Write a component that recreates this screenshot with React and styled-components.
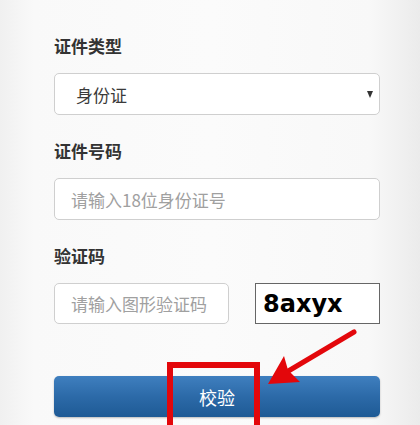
import React from "react";
import styled, { createGlobalStyle } from "styled-components";

const Global = createGlobalStyle`
  html, body { margin: 0; padding: 0; }
  body { font-family: "Noto Sans CJK SC", "Noto Sans", sans-serif; }
`;

const Page = styled.div`
  position: relative;
  width: 420px;
  height: 425px;
  overflow: hidden;
  background: linear-gradient(90deg, #f0f0f0 0%, #f9f9f9 8%, #fbfbfb 50%, #f8f8f8 88%, #ebebeb 100%);
`;

const Form = styled.div`
  display: flex;
  flex-direction: column;
  width: 326px;
  padding: 35px 0 0 54px;
`;

const Label = styled.div`
  font-size: 17px;
  line-height: 22px;
  font-weight: 700;
  color: #333;
  margin-top: ${(p) => (p.$first ? "0" : "25px")};
  margin-bottom: 16px;
`;

const Field = styled.div`
  box-sizing: border-box;
  height: ${(p) => p.$h || 42}px;
  width: ${(p) => (p.$w ? p.$w + "px" : "100%")};
  background: #fff;
  border: 1px solid #cfcfcf;
  border-radius: 5px;
  display: flex;
  align-items: center;
  justify-content: space-between;
  padding: 0 ${(p) => p.$pr || 12}px 0 ${(p) => p.$pl || 16}px;
  font-size: 17px;
  color: ${(p) => (p.$placeholder ? "#a0a0a0" : "#3a3a3a")};
  white-space: nowrap;
`;

const Caret = styled.span`
  width: 0;
  height: 0;
  border-left: 3.5px solid transparent;
  border-right: 3.5px solid transparent;
  border-top: 7px solid #333;
`;

const Row = styled.div`
  display: flex;
  align-items: center;
  justify-content: space-between;
`;

const Captcha = styled.div`
  box-sizing: border-box;
  width: 125px;
  height: 41px;
  background: #fff;
  border: 1px solid #666;
  display: flex;
  align-items: center;
  padding-left: 7px;
  font-family: "DejaVu Sans", sans-serif;
  font-weight: 700;
  font-size: 24px;
  letter-spacing: 0;
  color: #000;
`;

const Button = styled.div`
  margin-top: 52px;
  height: 41px;
  border-radius: 5px;
  background: linear-gradient(180deg, #3f7fbf 0%, #2c6aa8 50%, #1e5a95 100%);
  box-shadow: 0 1px 2px rgba(0, 0, 0, 0.25);
  color: #fff;
  font-size: 18px;
  display: flex;
  align-items: center;
  justify-content: center;
`;

const RedBox = styled.div`
  position: absolute;
  left: 167px;
  top: 362px;
  width: 93px;
  height: 72px;
  box-sizing: border-box;
  border: 6px solid #e3070b;
`;

const ArrowSvg = styled.svg`
  position: absolute;
  left: 0;
  top: 0;
  pointer-events: none;
`;

export default function App() {
  return (
    <Page>
      <Global />
      <Form>
        <Label $first>证件类型</Label>
        <Field $pl={21} $pr={6}>
          <span>身份证</span>
          <Caret />
        </Field>
        <Label>证件号码</Label>
        <Field $placeholder $pl={16}>请输入18位身份证号</Field>
        <Label>验证码</Label>
        <Row>
          <Field $placeholder $w={175} $h={41} $pl={16}>请输入图形验证码</Field>
          <Captcha>8axyx</Captcha>
        </Row>
        <Button>校验</Button>
      </Form>
      <RedBox />
      <ArrowSvg width="420" height="425" viewBox="0 0 420 425">
        <line x1="354" y1="332" x2="285" y2="373" stroke="#e3070b" strokeWidth="5" strokeLinecap="round" />
        <polygon points="268,384 284,356 288,370 300,382" fill="#e3070b" />
      </ArrowSvg>
    </Page>
  );
}
